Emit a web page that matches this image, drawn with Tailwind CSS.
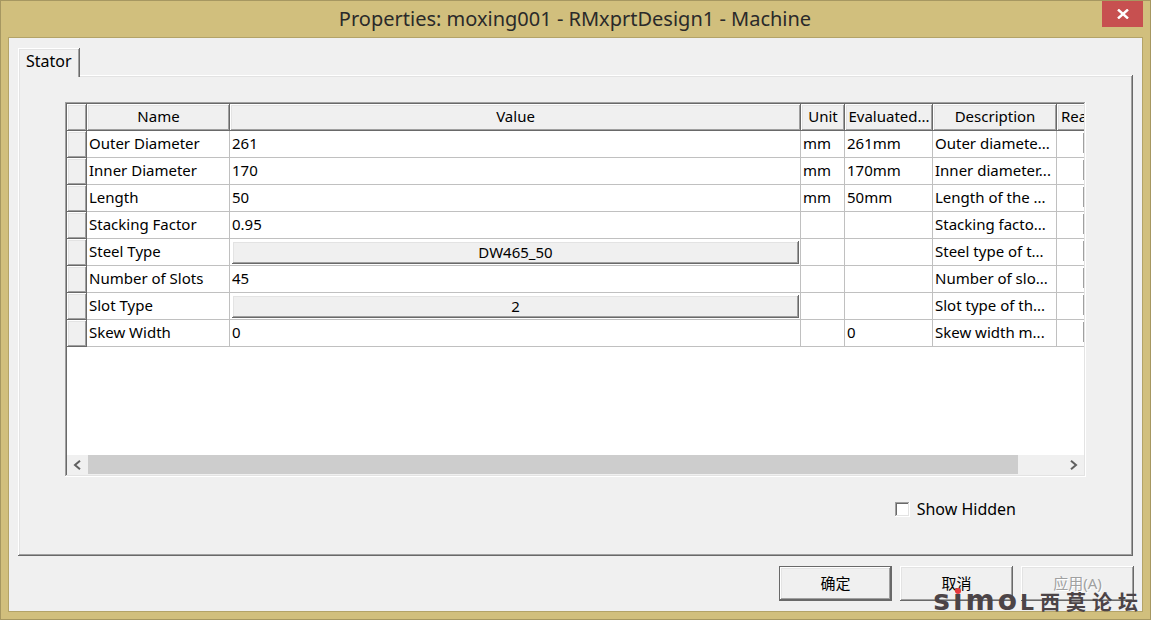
<!DOCTYPE html>
<html lang="en">
<head>
<meta charset="utf-8">
<title>Properties: moxing001 - RMxprtDesign1 - Machine</title>
<script src="https://cdn.jsdelivr.net/npm/@tailwindcss/browser@4"></script>
</head>
<body class="font-['Noto_Sans','Noto_Sans_CJK_SC',sans-serif] text-[15px] leading-5 text-black">
<div class="flex min-h-screen flex-col border border-[#a69761] bg-[#d1bf7d] px-[7px] pb-[7px]">
  <header class="flex h-9 items-start">
    <span class="w-10"></span>
    <h1 class="flex-1 pt-1 text-center text-[20px] leading-7 text-[#2a2a2a]">Properties: moxing001 - RMxprtDesign1 - Machine</h1>
    <button type="button" aria-label="Close" class="flex h-[26px] w-[41px] items-center justify-center bg-[#c75050]">
      <svg width="12" height="10" viewBox="0 0 12 10" fill="none" stroke="#fff" stroke-width="2.4"><path d="M1 .5 11 9.500M11 .5 1 9.500"/></svg>
    </button>
  </header>

  <main class="relative flex flex-1 flex-col border border-[#b3a368] bg-[#f0f0f0] px-[9px] pt-[10px]">
    <div role="tablist" class="z-10 -mb-[2px] flex">
      <button type="button" role="tab" aria-selected="true" class="h-[29px] bg-[#f0f0f0] px-2 pb-[3px] text-[16px] shadow-[inset_-1px_0_0_#696969,inset_1px_1px_0_#fff,inset_-2px_0_0_#a0a0a0,inset_2px_2px_0_#e3e3e3]">Stator</button>
    </div>
    <section class="flex flex-1 flex-col px-[47px] pt-[27px] shadow-[inset_-1px_-1px_0_#696969,inset_1px_1px_0_#fff,inset_-2px_-2px_0_#a0a0a0,inset_2px_2px_0_#e3e3e3]">
      <div class="flex h-[375px] flex-col bg-white p-[2px] shadow-[inset_-1px_-1px_0_#fff,inset_1px_1px_0_#a0a0a0,inset_-2px_-2px_0_#e3e3e3,inset_2px_2px_0_#696969]">
        <div class="flex-1 overflow-hidden">
          <table class="w-full table-fixed border-separate border-spacing-0 whitespace-nowrap [&_td]:h-[27px] [&_td]:overflow-hidden [&_td]:border-r [&_td]:border-b [&_td]:border-[#c0c0c0] [&_td]:p-0 [&_td]:pb-[2px] [&_td]:pl-[2px] [&_td:last-child]:border-r-0 [&_th]:h-[27px] [&_th]:overflow-hidden [&_th]:bg-[#f0f0f0] [&_th]:p-0 [&_th]:pb-[3px] [&_th]:font-normal [&_th]:shadow-[inset_-1px_-1px_0_#696969,inset_1px_1px_0_#fff,inset_-2px_-2px_0_#a0a0a0,inset_2px_2px_0_#e3e3e3]">
            <colgroup><col class="w-5"><col class="w-[143px]"><col><col class="w-11"><col class="w-[88px]"><col class="w-[124px]"><col class="w-[27px]"></colgroup>
            <thead>
              <tr><th></th><th scope="col">Name</th><th scope="col">Value</th><th scope="col">Unit</th><th scope="col">Evaluated...</th><th scope="col">Description</th><th scope="col" class="shadow-[inset_0_-1px_0_#696969,inset_1px_1px_0_#fff,inset_0_-2px_0_#a0a0a0,inset_2px_2px_0_#e3e3e3]!"><div class="overflow-hidden pl-1 text-left">Read-only</div></th></tr>
            </thead>
            <tbody>
              <tr><th></th><td>Outer Diameter</td><td>261</td><td>mm</td><td>261mm</td><td>Outer diamete...</td><td><div class="flex overflow-hidden pl-6"><input type="checkbox" aria-label="Outer Diameter read-only" class="size-5 shrink-0 appearance-none border border-[#a0a0a0]"></div></td></tr>
              <tr><th></th><td>Inner Diameter</td><td>170</td><td>mm</td><td>170mm</td><td>Inner diameter...</td><td><div class="flex overflow-hidden pl-6"><input type="checkbox" aria-label="Inner Diameter read-only" class="size-5 shrink-0 appearance-none border border-[#a0a0a0]"></div></td></tr>
              <tr><th></th><td>Length</td><td>50</td><td>mm</td><td>50mm</td><td>Length of the ...</td><td><div class="flex overflow-hidden pl-6"><input type="checkbox" aria-label="Length read-only" class="size-5 shrink-0 appearance-none border border-[#a0a0a0]"></div></td></tr>
              <tr><th></th><td>Stacking Factor</td><td>0.95</td><td></td><td></td><td>Stacking facto...</td><td><div class="flex overflow-hidden pl-6"><input type="checkbox" aria-label="Stacking Factor read-only" class="size-5 shrink-0 appearance-none border border-[#a0a0a0]"></div></td></tr>
              <tr><th></th><td>Steel Type</td><td class="pb-0!"><div class="flex h-[26px] pt-[2px] pr-px"><button type="button" class="h-[23px] flex-1 bg-[#f0f0f0] pb-[2px] shadow-[inset_-1px_-1px_0_#696969,inset_1px_1px_0_#fff,inset_-2px_-2px_0_#a0a0a0,inset_2px_2px_0_#e3e3e3]">DW465_50</button></div></td><td></td><td></td><td>Steel type of t...</td><td><div class="flex overflow-hidden pl-6"><input type="checkbox" aria-label="Steel Type read-only" class="size-5 shrink-0 appearance-none border border-[#a0a0a0]"></div></td></tr>
              <tr><th></th><td>Number of Slots</td><td>45</td><td></td><td></td><td>Number of slo...</td><td><div class="flex overflow-hidden pl-6"><input type="checkbox" aria-label="Number of Slots read-only" class="size-5 shrink-0 appearance-none border border-[#a0a0a0]"></div></td></tr>
              <tr><th></th><td>Slot Type</td><td class="pb-0!"><div class="flex h-[26px] pt-[2px] pr-px"><button type="button" class="h-[23px] flex-1 bg-[#f0f0f0] pb-[2px] shadow-[inset_-1px_-1px_0_#696969,inset_1px_1px_0_#fff,inset_-2px_-2px_0_#a0a0a0,inset_2px_2px_0_#e3e3e3]">2</button></div></td><td></td><td></td><td>Slot type of th...</td><td><div class="flex overflow-hidden pl-6"><input type="checkbox" aria-label="Slot Type read-only" class="size-5 shrink-0 appearance-none border border-[#a0a0a0]"></div></td></tr>
              <tr><th></th><td>Skew Width</td><td>0</td><td></td><td>0</td><td>Skew width m...</td><td><div class="flex overflow-hidden pl-6"><input type="checkbox" aria-label="Skew Width read-only" class="size-5 shrink-0 appearance-none border border-[#a0a0a0]"></div></td></tr>
            </tbody>
          </table>
        </div>
        <div class="flex h-5 bg-[#f0f0f0] pb-px">
          <button type="button" aria-label="Scroll left" class="flex w-[21px] items-center justify-center pr-[2px]"><svg width="8" height="10" viewBox="0 0 8 10" fill="none" stroke="#606060" stroke-width="2"><path d="M7 .8 2 5l5 4.200"/></svg></button>
          <div class="mr-[45px] flex-1 bg-[#cdcdcd]"></div>
          <button type="button" aria-label="Scroll right" class="flex w-[21px] items-center justify-center"><svg width="8" height="10" viewBox="0 0 8 10" fill="none" stroke="#606060" stroke-width="2"><path d="M1 .8 6 5 1 9.200"/></svg></button>
        </div>
      </div>
      <label class="mt-[22px] flex items-center gap-[7px] self-end pr-[70px] text-[16px]">
        <input type="checkbox" class="size-[15px] appearance-none bg-white shadow-[inset_-1px_-1px_0_#fff,inset_1px_1px_0_#a0a0a0,inset_-2px_-2px_0_#e3e3e3,inset_2px_2px_0_#696969]">Show Hidden</label>
    </section>
    <footer class="-mr-px flex justify-end gap-2 py-[10px]">
      <button type="button" class="h-[35px] w-[113px] border border-[#696969] pb-[2px] shadow-[inset_-1px_-1px_0_#696969,inset_1px_1px_0_#fff,inset_-2px_-2px_0_#a0a0a0,inset_2px_2px_0_#e3e3e3]">确定</button>
      <button type="button" class="h-[35px] w-[113px] pb-[2px] shadow-[inset_-1px_-1px_0_#696969,inset_1px_1px_0_#fff,inset_-2px_-2px_0_#a0a0a0,inset_2px_2px_0_#e3e3e3]">取消</button>
      <button type="button" disabled class="h-[35px] w-[113px] pb-[2px] text-[#a0a0a0] shadow-[inset_-1px_-1px_0_#696969,inset_1px_1px_0_#fff,inset_-2px_-2px_0_#a0a0a0,inset_2px_2px_0_#e3e3e3] text-shadow-[1px_1px_0_#fff]">应用(A)</button>
    </footer>
    <div class="pointer-events-none absolute right-1 bottom-0 flex h-5 items-baseline gap-[6px] font-bold leading-5 text-[#4c4447]">
      <span class="flex items-baseline gap-[3px] font-['DejaVu_Sans',sans-serif] text-[28px]"><span>s</span><span class="relative">i<span class="absolute -top-[3px] left-[2px] size-[6px] rounded-full bg-[#e8383d]"></span></span><span>m</span><span>o</span><span class="text-[22px]">L</span></span>
      <span class="flex gap-[6px] font-['Noto_Sans_CJK_SC',sans-serif] text-[20px]"><span>西</span><span>莫</span><span>论</span><span>坛</span></span>
    </div>
  </main>
</div>
</body>
</html>
